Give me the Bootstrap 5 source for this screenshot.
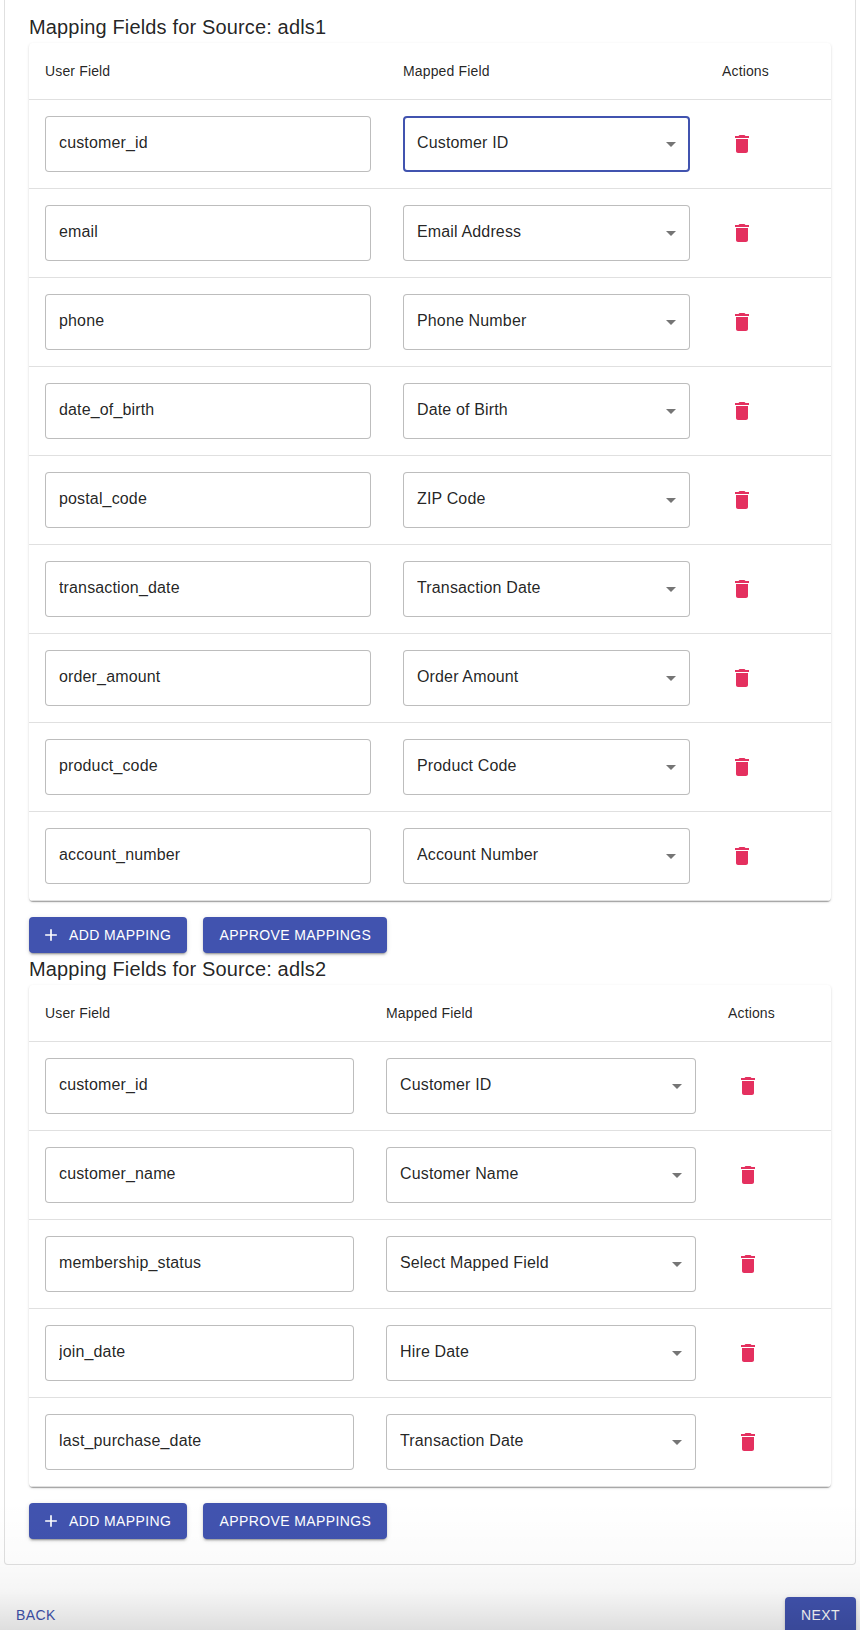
<!DOCTYPE html>
<html lang="en">
<head>
<meta charset="utf-8">
<title>Mapping Fields</title>
<link href="https://cdn.jsdelivr.net/npm/bootstrap@5.3.0/dist/css/bootstrap.min.css" rel="stylesheet">
<style>
html, body { height: 1630px; overflow: hidden; }
body { font-family: "Liberation Sans", Arial, sans-serif; color: rgba(0,0,0,.87); background: #fff; padding: 0 4px; position: relative; }
.outer-panel { border: 1px solid #e0e0e0; border-top: 0; border-radius: 0 0 4px 4px; padding: 11px 24px 25px; background: #fff; }
.source-title { font-size: 20px; line-height: 32px; font-weight: 400; letter-spacing: .15px; margin: 0; color: rgba(0,0,0,.87); }
.map-paper { border-radius: 4px; background: #fff; box-shadow: 0 2px 1px -1px rgba(0,0,0,.2), 0 1px 1px 0 rgba(0,0,0,.14), 0 1px 3px 0 rgba(0,0,0,.12); overflow: hidden; }
.map-table { table-layout: fixed; width: 100%; margin: 0; border-collapse: separate; border-spacing: 0; }
.map-table.t-a .c1 { width: 358px; } .map-table.t-a .c2 { width: 319px; }
.map-table.t-b .c1 { width: 341px; } .map-table.t-b .c2 { width: 342px; }
.map-table > thead > tr > th { height: 57px; padding: 0 16px; font-size: 14px; line-height: 20px; font-weight: 500; letter-spacing: .15px; vertical-align: middle; border-bottom: 1px solid #e0e0e0; color: rgba(0,0,0,.87); }
.map-table > tbody > tr > td { padding: 16px; height: 89px; vertical-align: top; border-bottom: 1px solid #e0e0e0; }
.map-input, .map-select { height: 56px; font-size: 16px; line-height: 23px; letter-spacing: .15px; color: rgba(0,0,0,.87); border: 1px solid rgba(0,0,0,.26); border-radius: 4px; background-color: #fff; font-family: inherit; box-shadow: none; }
.map-input { padding: 15px 13px 17px; }
.map-select { padding: 14px 32px 18px 13px; background-image: url("data:image/svg+xml,%3Csvg xmlns='http://www.w3.org/2000/svg' viewBox='0 0 24 24'%3E%3Cpath fill='%23757575' d='M7 10l5 5 5-5z'/%3E%3C/svg%3E"); background-repeat: no-repeat; background-position: right 6px center; background-size: 24px 24px; }
.map-select.is-on { border: 2px solid #4153af; padding: 13px 31px 17px 12px; background-position: right 5px center; }
.trash-btn { width: 40px; height: 40px; margin-top: 8px; padding: 8px; border: 0; background: none; color: #e4305f; display: block; }
.trash-btn svg { width: 24px; height: 24px; display: block; fill: currentColor; }
.act-row { margin-top: 16px; gap: 16px; }
.act-btn { height: 36px; padding: 6px 16px; font-size: 14px; line-height: 24px; font-weight: 500; letter-spacing: .4px; text-transform: uppercase; color: #fff; background: #4153af; border: 0; border-radius: 4px; box-shadow: 0 3px 1px -2px rgba(0,0,0,.2), 0 2px 2px 0 rgba(0,0,0,.14), 0 1px 5px 0 rgba(0,0,0,.12); white-space: nowrap; }
.act-btn svg { width: 20px; height: 20px; margin: 0 8px 0 -4px; fill: currentColor; vertical-align: -5px; }
.foot-row { margin-top: 32px; }
.back-btn { height: 36px; padding: 6px 12px; font-size: 14px; line-height: 24px; font-weight: 500; letter-spacing: .4px; text-transform: uppercase; color: #4153af; background: none; border: 0; }
.foot-shade { position: absolute; left: 0; right: 0; bottom: 0; height: 130px; pointer-events: none; background: linear-gradient(to bottom, rgba(0,0,0,0), rgba(0,0,0,.015) 45%, rgba(0,0,0,.04) 70%, rgba(0,0,0,.13)); }
</style>
</head>
<body>
<svg width="0" height="0" class="d-block position-absolute"><defs><symbol id="ico-del" viewBox="0 0 24 24"><path d="M6 19c0 1.1.9 2 2 2h8c1.1 0 2-.9 2-2V7H6v12zM19 4h-3.5l-1-1h-5l-1 1H5v2h14V4z"/></symbol></defs></svg>
<div class="outer-panel">
  <h6 class="source-title">Mapping Fields for Source: adls1</h6>
  <div class="map-paper">
    <table class="table map-table t-a">
      <thead><tr><th class="c1">User Field</th><th class="c2">Mapped Field</th><th>Actions</th></tr></thead>
      <tbody>
        <tr><td><input class="form-control map-input" value="customer_id"></td><td><select class="form-select map-select is-on"><option>Customer ID</option></select></td><td><button class="trash-btn" aria-label="Delete"><svg><use href="#ico-del"/></svg></button></td></tr>
        <tr><td><input class="form-control map-input" value="email"></td><td><select class="form-select map-select"><option>Email Address</option></select></td><td><button class="trash-btn" aria-label="Delete"><svg><use href="#ico-del"/></svg></button></td></tr>
        <tr><td><input class="form-control map-input" value="phone"></td><td><select class="form-select map-select"><option>Phone Number</option></select></td><td><button class="trash-btn" aria-label="Delete"><svg><use href="#ico-del"/></svg></button></td></tr>
        <tr><td><input class="form-control map-input" value="date_of_birth"></td><td><select class="form-select map-select"><option>Date of Birth</option></select></td><td><button class="trash-btn" aria-label="Delete"><svg><use href="#ico-del"/></svg></button></td></tr>
        <tr><td><input class="form-control map-input" value="postal_code"></td><td><select class="form-select map-select"><option>ZIP Code</option></select></td><td><button class="trash-btn" aria-label="Delete"><svg><use href="#ico-del"/></svg></button></td></tr>
        <tr><td><input class="form-control map-input" value="transaction_date"></td><td><select class="form-select map-select"><option>Transaction Date</option></select></td><td><button class="trash-btn" aria-label="Delete"><svg><use href="#ico-del"/></svg></button></td></tr>
        <tr><td><input class="form-control map-input" value="order_amount"></td><td><select class="form-select map-select"><option>Order Amount</option></select></td><td><button class="trash-btn" aria-label="Delete"><svg><use href="#ico-del"/></svg></button></td></tr>
        <tr><td><input class="form-control map-input" value="product_code"></td><td><select class="form-select map-select"><option>Product Code</option></select></td><td><button class="trash-btn" aria-label="Delete"><svg><use href="#ico-del"/></svg></button></td></tr>
        <tr><td><input class="form-control map-input" value="account_number"></td><td><select class="form-select map-select"><option>Account Number</option></select></td><td><button class="trash-btn" aria-label="Delete"><svg><use href="#ico-del"/></svg></button></td></tr>
      </tbody>
    </table>
  </div>
  <div class="d-flex act-row">
    <button class="btn act-btn"><svg viewBox="0 0 24 24"><path d="M19 13h-6v6h-2v-6H5v-2h6V5h2v6h6v2z"/></svg>Add Mapping</button>
    <button class="btn act-btn">Approve Mappings</button>
  </div>
  <h6 class="source-title">Mapping Fields for Source: adls2</h6>
  <div class="map-paper">
    <table class="table map-table t-b">
      <thead><tr><th class="c1">User Field</th><th class="c2">Mapped Field</th><th>Actions</th></tr></thead>
      <tbody>
        <tr><td><input class="form-control map-input" value="customer_id"></td><td><select class="form-select map-select"><option>Customer ID</option></select></td><td><button class="trash-btn" aria-label="Delete"><svg><use href="#ico-del"/></svg></button></td></tr>
        <tr><td><input class="form-control map-input" value="customer_name"></td><td><select class="form-select map-select"><option>Customer Name</option></select></td><td><button class="trash-btn" aria-label="Delete"><svg><use href="#ico-del"/></svg></button></td></tr>
        <tr><td><input class="form-control map-input" value="membership_status"></td><td><select class="form-select map-select"><option>Select Mapped Field</option></select></td><td><button class="trash-btn" aria-label="Delete"><svg><use href="#ico-del"/></svg></button></td></tr>
        <tr><td><input class="form-control map-input" value="join_date"></td><td><select class="form-select map-select"><option>Hire Date</option></select></td><td><button class="trash-btn" aria-label="Delete"><svg><use href="#ico-del"/></svg></button></td></tr>
        <tr><td><input class="form-control map-input" value="last_purchase_date"></td><td><select class="form-select map-select"><option>Transaction Date</option></select></td><td><button class="trash-btn" aria-label="Delete"><svg><use href="#ico-del"/></svg></button></td></tr>
      </tbody>
    </table>
  </div>
  <div class="d-flex act-row">
    <button class="btn act-btn"><svg viewBox="0 0 24 24"><path d="M19 13h-6v6h-2v-6H5v-2h6V5h2v6h6v2z"/></svg>Add Mapping</button>
    <button class="btn act-btn">Approve Mappings</button>
  </div>
</div>
<div class="d-flex justify-content-between foot-row">
  <button class="btn back-btn">Back</button>
  <button class="btn act-btn">Next</button>
</div>
<div class="foot-shade"></div>
</body>
</html>
